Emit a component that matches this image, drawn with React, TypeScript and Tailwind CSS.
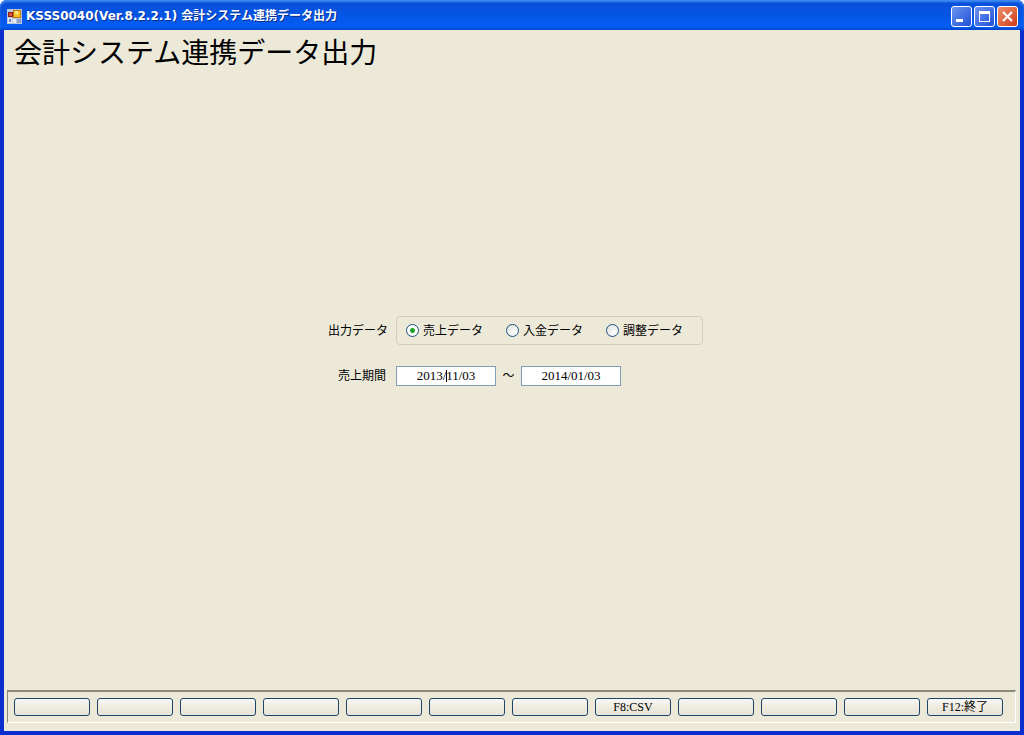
const outputTypes = ['売上データ', '入金データ', '調整データ'];

const functionKeys = ['', '', '', '', '', '', '', 'F8:CSV', '', '', '', 'F12:終了'];

function AppIcon() {
  return (
    <svg width="15" height="15" viewBox="0 0 15 15" shapeRendering="crispEdges" aria-hidden="true">
      <rect x="0" y="0" width="15" height="15" fill="#b9c6e0" />
      <rect x="1" y="3" width="5" height="5" fill="#8a1f1a" />
      <rect x="2" y="4" width="3" height="3" fill="#e0543a" />
      <rect x="6" y="1" width="8" height="8" fill="#c07a10" />
      <rect x="7" y="2" width="6" height="6" fill="#f8c32c" />
      <rect x="8" y="2" width="3" height="3" fill="#ffe98a" />
      <rect x="1" y="9" width="4" height="5" fill="#e8ecf5" />
      <rect x="2" y="10" width="2" height="3" fill="#6c86c8" />
      <rect x="6" y="10" width="3" height="4" fill="#e8ecf5" />
      <rect x="10" y="10" width="4" height="4" fill="#8fa0c4" />
    </svg>
  );
}

function TitleBar() {
  const button =
    'flex size-[21px] items-center justify-center rounded-[3px] border border-white bg-linear-to-br';

  return (
    <header className="flex h-[30px] items-center rounded-t-[7px] bg-linear-to-b from-[#0a4fd8] via-[#0455e4] to-[#0560fb] pt-[2px] pr-[6px] pl-[7px] shadow-[inset_0_2px_2px_#3f8cf3,inset_0_-2px_2px_#0348cf]">
      <AppIcon />
      <h1 className="ml-1 flex-1 text-[12px] leading-4 font-bold whitespace-pre text-white [font-family:'DejaVu_Sans','Noto_Sans_CJK_JP',sans-serif] [text-shadow:1px_1px_#0a2f90]">
        KSSS0040(Ver.8.2.2.1) 会計システム連携データ出力
      </h1>
      <div className="flex gap-[2px]">
        <button type="button" aria-label="最小化" className={`${button} from-[#6c93f0] to-[#1f4fd6]`}>
          <svg width="19" height="19" viewBox="0 0 19 19" shapeRendering="crispEdges">
            <rect x="4" y="12" width="7" height="3" fill="#fff" />
          </svg>
        </button>
        <button type="button" aria-label="最大化" className={`${button} from-[#6c93f0] to-[#1f4fd6]`}>
          <svg width="19" height="19" viewBox="0 0 19 19" shapeRendering="crispEdges">
            <path d="M4 4h11v11H4zM5 7v7h9V7z" fill="#fff" fillRule="evenodd" />
          </svg>
        </button>
        <button type="button" aria-label="閉じる" className={`${button} from-[#f0906c] to-[#cc3a12]`}>
          <svg width="19" height="19" viewBox="0 0 19 19">
            <path d="M5 5l9 9M14 5l-9 9" stroke="#fff" strokeWidth="2.2" />
          </svg>
        </button>
      </div>
    </header>
  );
}

function OutputForm() {
  const dateBox =
    'h-5 w-[100px] border border-[#7f9db9] bg-white text-center text-[13px] leading-4 outline-none';

  return (
    <form className="grid grid-cols-[75px_307px] items-center gap-y-[21px] text-[12px] leading-4">
      <span id="output-type" className="pr-2 text-right">
        出力データ
      </span>
      <div
        role="radiogroup"
        aria-labelledby="output-type"
        className="flex h-[29px] items-center rounded-[4px] border border-[#d0d0bf] pl-[9px]"
      >
        {outputTypes.map((type, i) => (
          <label key={type} className="flex w-[100px] shrink-0 items-center gap-1 last:w-auto">
            <input
              type="radio"
              name="outputType"
              defaultChecked={i === 0}
              className="size-[13px] appearance-none rounded-full border border-[#1c5180] bg-[radial-gradient(circle_at_70%_70%,#ffffff,#dcdfd8)] checked:bg-[radial-gradient(circle,#21a121_0_2px,#ffffff_3px)]"
            />
            {type}
          </label>
        ))}
      </div>

      <label htmlFor="date-from" className="pr-[10px] text-right">
        売上期間
      </label>
      <div className="flex items-center">
        <div className="relative">
          <input id="date-from" type="text" defaultValue="2013/11/03" className={dateBox} />
          {/* text cursor in front of the month */}
          <span className="absolute top-1 left-[50px] h-3 w-px bg-black" />
        </div>
        <span className="w-[25px] text-center">～</span>
        <input type="text" aria-label="売上期間 終了" defaultValue="2014/01/03" className={dateBox} />
      </div>
    </form>
  );
}

function FunctionBar() {
  return (
    <footer className="mr-1 mb-2 ml-[3px] grid grid-cols-12 gap-[7px] border border-t-2 border-t-[#8c8a78] border-r-white border-b-white border-l-[#8c8a78] py-[6px] pr-3 pl-[6px]">
      {functionKeys.map((label, i) => (
        <button
          key={i}
          type="button"
          aria-label={label || `F${i + 1}`}
          className="h-[18px] rounded-[3px] border border-[#1f4468] bg-linear-to-b from-[#f6f8f8] via-[#efebde] to-[#e6e5dc] text-[12px] leading-4"
        >
          {label}
        </button>
      ))}
    </footer>
  );
}

export default function App() {
  return (
    <div className="flex min-h-screen flex-col rounded-t-[7px] bg-[#0a2fd0] text-black [font-family:'Liberation_Serif','Noto_Sans_CJK_JP',serif]">
      <TitleBar />
      <main className="mx-1 mb-1 flex flex-1 flex-col bg-[#ece9d8]">
        <h2 className="px-[10px] pt-1 text-[28px] leading-10">会計システム連携データ出力</h2>
        <div className="flex flex-1 justify-center pt-[242px]">
          <div>
            <OutputForm />
          </div>
        </div>
        <FunctionBar />
      </main>
    </div>
  );
}
